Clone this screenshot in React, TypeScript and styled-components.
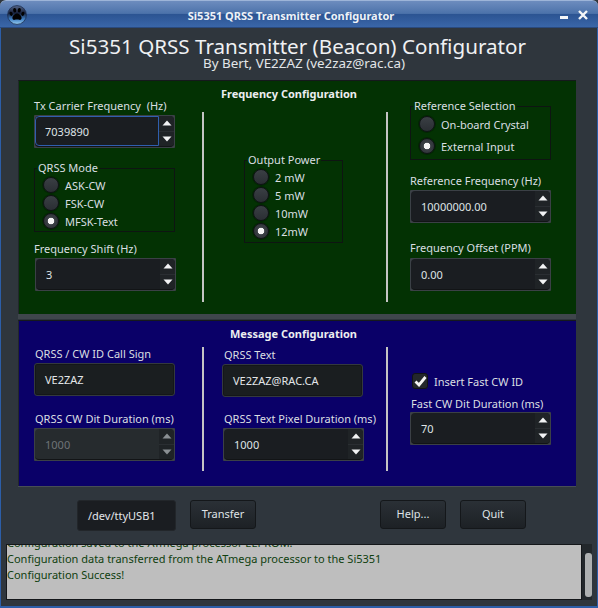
import React from "react";
import styled, { createGlobalStyle } from "styled-components";

const GlobalStyle = createGlobalStyle`
  html, body {
    margin: 0;
    padding: 0;
    background: #2f363d;
    overflow: hidden;
  }
  * {
    box-sizing: border-box;
  }
`;

const Window = styled.div`
  width: 598px;
  height: 608px;
  display: flex;
  flex-direction: column;
  background: #2f363d;
  color: #d9dde0;
  font-family: "Noto Sans", "DejaVu Sans", sans-serif;
  font-size: 11px;
  overflow: hidden;
`;

const TitleBar = styled.div`
  height: 28px;
  flex: none;
  display: flex;
  align-items: center;
  padding: 2px 9px 0 7px;
  border-radius: 6px 6px 0 0;
  border-top: 1px solid #9db4d8;
  border-bottom: 1px solid #2a4a7e;
  background: linear-gradient(
    #6d8cbe 0,
    #4c72aa 48%,
    #2b5391 49%,
    #3a66a8 100%
  );
`;

const TitleText = styled.div`
  flex: 1;
  text-align: center;
  font-size: 11px;
  font-weight: 700;
  color: #eef2f7;
  padding-right: 5px;
`;

const WinButtons = styled.div`
  display: flex;
  align-items: center;
  gap: 8px;
`;

const Body = styled.div`
  flex: 1;
  display: flex;
  flex-direction: column;
  border: 1px solid #2c5ea8;
  border-top: none;
  border-bottom-width: 2px;
  padding: 0 0 0 5px;
`;

const Heading = styled.h1`
  margin: 8px 0 0;
  font-size: 20.6px;
  line-height: 20px;
  font-weight: 400;
  text-align: center;
  color: #eff1f3;
  padding-right: 8px;
`;

const Byline = styled.div`
  font-size: 13.4px;
  line-height: 14px;
  text-align: center;
  color: #e3e6e9;
  padding-left: 5px;
`;

const Panel = styled.section<{ $bg: string; $height: number }>`
  width: 558px;
  height: ${(p) => p.$height}px;
  margin-left: 12px;
  background: ${(p) => p.$bg};
  display: flex;
  flex-direction: column;
  border-top: 1px solid #15191c;
  border-left: 1px solid #22272b;
`;

const GreenPanel = styled(Panel)`
  margin-top: 10px;
  box-shadow: 0 1px 0 #3f464c, 0 5px 0 #3f464c;
`;

const BluePanel = styled(Panel)`
  margin-top: 6px;
  border-top: 1px solid #15191c;
  box-shadow: 0 1px 0 #474e54;
`;

const PanelTitle = styled.div<{ $shift: number }>`
  margin-top: 6px;
  font-size: 11px;
  line-height: 14px;
  font-weight: 700;
  text-align: center;
  color: #eceef0;
  padding-right: ${(p) => p.$shift}px;
`;

const Columns = styled.div<{ $top: number }>`
  display: grid;
  grid-template-columns: 183px 2px 182px 2px 1fr;
  margin-top: ${(p) => p.$top}px;
`;

const Divider = styled.div<{ $height: number }>`
  width: 2px;
  height: ${(p) => p.$height}px;
  background: #c4c4c4;
`;

const Column = styled.div<{ $left: number; $top?: number }>`
  display: flex;
  flex-direction: column;
  align-items: flex-start;
  padding-left: ${(p) => p.$left}px;
  padding-top: ${(p) => p.$top ?? 0}px;
`;

const FieldLabel = styled.label<{ $top?: number; $left?: number }>`
  display: block;
  font-size: 11px;
  line-height: 14px;
  white-space: pre;
  color: #dadfe2;
  margin-top: ${(p) => p.$top ?? 0}px;
  margin-left: ${(p) => p.$left ?? 0}px;
`;

const SpinFrame = styled.div<{ $disabled?: boolean; $left?: number; $top?: number }>`
  width: 141px;
  height: 33px;
  display: flex;
  padding: 1px;
  margin-top: ${(p) => p.$top ?? 2}px;
  margin-left: ${(p) => p.$left ?? 0}px;
  background: #3b4046;
  border-radius: 1px;
  color: ${(p) => (p.$disabled ? "#6e7377" : "#dfe3e6")};
`;

const SpinInner = styled.div<{ $disabled?: boolean }>`
  flex: 1;
  display: flex;
  border-radius: 4px;
  overflow: hidden;
  background: ${(p) => (p.$disabled ? "#262b2e" : "#1a1d21")};
  border-bottom: 1px solid #121416;
`;

const SpinValue = styled.div<{ $focused?: boolean }>`
  flex: 1;
  display: flex;
  align-items: center;
  padding-left: 9px;
  font-size: 11px;
  border-radius: 4px 0 0 4px;
  border: 1px solid ${(p) => (p.$focused ? "#2f5fae" : "transparent")};
`;

const SpinArrows = styled.div`
  width: 15px;
  display: flex;
  flex-direction: column;
  background: #1f2326;
`;

const ArrowButton = styled.div`
  flex: 1;
  display: flex;
  align-items: center;
  justify-content: center;
  & + & {
    border-top: 1px solid #2a2e32;
  }
`;

const TextBox = styled.div<{ $left?: number; $top?: number }>`
  width: 141px;
  height: 33px;
  display: flex;
  align-items: center;
  padding-left: 10px;
  font-size: 11px;
  color: #e3e6e9;
  margin-top: ${(p) => p.$top ?? 2}px;
  margin-left: ${(p) => p.$left ?? 0}px;
  background: #1a1e20;
  border-radius: 3px;
  border: 1px solid #34393f;
  box-shadow: inset 0 0 0 1px #141719;
`;

const Group = styled.fieldset<{ $width: number; $height: number; $top?: number; $gap: number; $pad: number }>`
  width: ${(p) => p.$width}px;
  height: ${(p) => p.$height}px;
  margin: ${(p) => p.$top ?? 0}px 0 0;
  padding: ${(p) => p.$pad}px 0 0 0;
  border: 1px solid #0e1512;
  display: flex;
  flex-direction: column;
  gap: ${(p) => p.$gap}px;
  min-width: 0;
`;

const Legend = styled.legend`
  margin-left: 2px;
  padding: 0 1px;
  font-size: 11px;
  line-height: 14px;
  color: #dadfe2;
`;

const RadioRow = styled.div`
  display: flex;
  align-items: center;
  gap: 6px;
  height: 16px;
  margin-left: 8px;
  font-size: 11px;
  color: #dadfe2;
`;

const RadioCircle = styled.span<{ $checked?: boolean }>`
  width: 16px;
  height: 16px;
  flex: none;
  border-radius: 50%;
  border: 1px solid #101316;
  background: ${(p) =>
    p.$checked
      ? "radial-gradient(circle, #f4f4f4 0 3px, #3a3f44 3.6px, #2a2e33 100%)"
      : "linear-gradient(#3a3f44, #2a2e33)"};
  box-shadow: 0 0 0 1px rgba(0, 0, 0, 0.25);
`;

const CheckRow = styled.div`
  display: flex;
  align-items: center;
  gap: 6px;
  margin-left: 2px;
  font-size: 11px;
  color: #dadfe2;
`;

const CheckBox = styled.span`
  width: 16px;
  height: 16px;
  display: flex;
  align-items: center;
  justify-content: center;
  border-radius: 3px;
  background: #23272b;
  border: 1px solid #111315;
`;

const ActionRow = styled.div`
  display: flex;
  align-items: flex-start;
  margin: 14px 0 0 71px;
  height: 31px;
`;

const PortBox = styled.div`
  width: 99px;
  height: 31px;
  display: flex;
  align-items: center;
  padding-left: 10px;
  font-size: 11px;
  color: #e3e6e9;
  background: #1a1d21;
  border: 1px solid #22262a;
  border-radius: 3px;
`;

const PushButton = styled.button<{ $left: number }>`
  width: 66px;
  height: 29px;
  margin-left: ${(p) => p.$left}px;
  padding: 0 0 3px;
  font-family: inherit;
  font-size: 11px;
  color: #dfe3e6;
  border: 1px solid #14171a;
  border-radius: 3px;
  background: linear-gradient(#2a3036, #1d2125);
`;

const LogRow = styled.div`
  display: flex;
  height: 56px;
  margin-top: 13px;
  width: 586px;
`;

const LogArea = styled.div`
  width: 576px;
  height: 56px;
  overflow: hidden;
  background: #bebebe;
  border: 1px solid #14171a;
  color: #0f400f;
  font-size: 11px;
  line-height: 16px;
`;

const LogLines = styled.div`
  margin-top: -10px;
  white-space: pre;
`;

const ScrollTrack = styled.div`
  width: 10px;
  background: #22272b;
  padding: 9px 0 3px 3px;
`;

const ScrollThumb = styled.div`
  height: 100%;
  border-radius: 3px;
  background: #aeb0b1;
`;

function Paw() {
  return (
    <svg width="20" height="20" viewBox="0 0 20 20">
      <defs>
        <linearGradient id="pawBall" x1="0" y1="0" x2="0" y2="1">
          <stop offset="0" stopColor="#56678a" />
          <stop offset="0.4" stopColor="#16203a" />
          <stop offset="0.72" stopColor="#3f7fc4" />
          <stop offset="1" stopColor="#9ad0f2" />
        </linearGradient>
      </defs>
      <circle cx="10" cy="10" r="9.400" fill="url(#pawBall)" stroke="#1c2c4c" strokeWidth="0.800" />
      <g fill="#020202">
        <path d="M10 8.400c2.400 0 4.600 2.600 4.600 4.600 0 1.700-1.400 2.100-2.400 1.800-1.400-.4-3-.4-4.400 0-1 .3-2.400-.1-2.400-1.800 0-2 2.200-4.600 4.600-4.600z" />
        <ellipse cx="4.200" cy="8.800" rx="1.500" ry="2.100" transform="rotate(-20 4.200 8.800)" />
        <ellipse cx="7.700" cy="5.200" rx="1.600" ry="2.300" transform="rotate(-8 7.700 5.200)" />
        <ellipse cx="12.300" cy="5.200" rx="1.600" ry="2.300" transform="rotate(8 12.300 5.200)" />
        <ellipse cx="15.800" cy="8.800" rx="1.500" ry="2.100" transform="rotate(20 15.800 8.800)" />
      </g>
    </svg>
  );
}

function MinimizeIcon() {
  return (
    <svg width="9" height="12" viewBox="0 0 9 12">
      <rect x="0" y="7" width="8" height="3" fill="#f4f6f8" />
    </svg>
  );
}

function CloseIcon() {
  return (
    <svg width="12" height="12" viewBox="0 0 12 12">
      <path d="M2 2l8 8M10 2l-8 8" stroke="#f4f6f8" strokeWidth="2.400" />
    </svg>
  );
}

function Arrow({ up, color }: { up?: boolean; color: string }) {
  return (
    <svg width="10" height="6" viewBox="0 0 10 6">
      <path d={up ? "M5 0.500L9.500 5.500H0.500z" : "M0.500 0.500H9.500L5 5.500z"} fill={color} />
    </svg>
  );
}

type SpinProps = {
  value: string;
  focused?: boolean;
  disabled?: boolean;
  left?: number;
  top?: number;
};

function Spin({ value, focused, disabled, left, top }: SpinProps) {
  const color = disabled ? "#8a8f93" : "#f2f3f4";
  return (
    <SpinFrame $disabled={disabled} $left={left} $top={top}>
      <SpinInner $disabled={disabled}>
        <SpinValue $focused={focused}>{value}</SpinValue>
        <SpinArrows>
          <ArrowButton>
            <Arrow up color={color} />
          </ArrowButton>
          <ArrowButton>
            <Arrow color={color} />
          </ArrowButton>
        </SpinArrows>
      </SpinInner>
    </SpinFrame>
  );
}

function Radio({ label, checked }: { label: string; checked?: boolean }) {
  return (
    <RadioRow>
      <RadioCircle $checked={checked} />
      {label}
    </RadioRow>
  );
}

export default function App() {
  return (
    <Window>
      <GlobalStyle />
      <TitleBar>
        <Paw />
        <TitleText>Si5351 QRSS Transmitter Configurator</TitleText>
        <WinButtons>
          <MinimizeIcon />
          <CloseIcon />
        </WinButtons>
      </TitleBar>
      <Body>
        <Heading>Si5351 QRSS Transmitter (Beacon) Configurator</Heading>
        <Byline>By Bert, VE2ZAZ (ve2zaz@rac.ca)</Byline>

        <GreenPanel $bg="#033203" $height={234}>
          <PanelTitle $shift={17}>Frequency Configuration</PanelTitle>
          <Columns $top={11}>
            <Column $left={15}>
              <FieldLabel $top={-13}>{"Tx Carrier Frequency  (Hz)"}</FieldLabel>
              <Spin value="7039890" focused />
              <Group $width={141} $height={71} $top={13} $gap={2} $pad={2}>
                <Legend>QRSS Mode</Legend>
                <Radio label="ASK-CW" />
                <Radio label="FSK-CW" />
                <Radio label="MFSK-Text" checked />
              </Group>
              <FieldLabel $top={10}>Frequency Shift (Hz)</FieldLabel>
              <Spin value="3" left={1} />
            </Column>
            <Divider $height={190} />
            <Column $left={40} $top={41}>
              <Group $width={99} $height={90} $gap={2} $pad={2}>
                <Legend>Output Power</Legend>
                <Radio label="2 mW" />
                <Radio label="5 mW" />
                <Radio label="10mW" />
                <Radio label="12mW" checked />
              </Group>
            </Column>
            <Divider $height={190} />
            <Column $left={22}>
              <Group $width={141} $height={61} $top={-13} $gap={6} $pad={3}>
                <Legend>Reference Selection</Legend>
                <Radio label="On-board Crystal" />
                <Radio label="External Input" checked />
              </Group>
              <FieldLabel $top={14}>Reference Frequency (Hz)</FieldLabel>
              <Spin value="10000000.00" />
              <FieldLabel $top={18}>Frequency Offset (PPM)</FieldLabel>
              <Spin value="0.00" top={3} />
            </Column>
          </Columns>
        </GreenPanel>

        <BluePanel $bg="#0a0068" $height={166}>
          <PanelTitle $shift={8}>Message Configuration</PanelTitle>
          <Columns $top={6}>
            <Column $left={15}>
              <FieldLabel $left={1}>QRSS / CW ID Call Sign</FieldLabel>
              <TextBox>VE2ZAZ</TextBox>
              <FieldLabel $top={16} $left={1}>QRSS CW Dit Duration (ms)</FieldLabel>
              <Spin value="1000" disabled />
            </Column>
            <Divider $height={124} />
            <Column $left={18}>
              <FieldLabel $top={1} $left={2}>QRSS Text</FieldLabel>
              <TextBox>VE2ZAZ@RAC.CA</TextBox>
              <FieldLabel $top={15} $left={2}>QRSS Text Pixel Duration (ms)</FieldLabel>
              <Spin value="1000" left={1} />
            </Column>
            <Divider $height={124} />
            <Column $left={22} $top={26}>
              <CheckRow>
                <CheckBox>
                  <svg width="13" height="12" viewBox="0 0 13 12">
                    <path d="M1.500 6.500L5 10L11.500 2" fill="none" stroke="#f4f4f4" strokeWidth="2.800" />
                  </svg>
                </CheckBox>
                Insert Fast CW ID
              </CheckRow>
              <FieldLabel $top={8} $left={1}>Fast CW Dit Duration (ms)</FieldLabel>
              <Spin value="70" top={1} />
            </Column>
          </Columns>
        </BluePanel>

        <ActionRow>
          <PortBox>/dev/ttyUSB1</PortBox>
          <PushButton $left={14}>Transfer</PushButton>
          <PushButton $left={124}>Help...</PushButton>
          <PushButton $left={14}>Quit</PushButton>
        </ActionRow>

        <LogRow>
          <LogArea>
            <LogLines>
              {"Configuration saved to the ATmega processor EEPROM.\nConfiguration data transferred from the ATmega processor to the Si5351\nConfiguration Success!"}
            </LogLines>
          </LogArea>
          <ScrollTrack>
            <ScrollThumb />
          </ScrollTrack>
        </LogRow>
      </Body>
    </Window>
  );
}
